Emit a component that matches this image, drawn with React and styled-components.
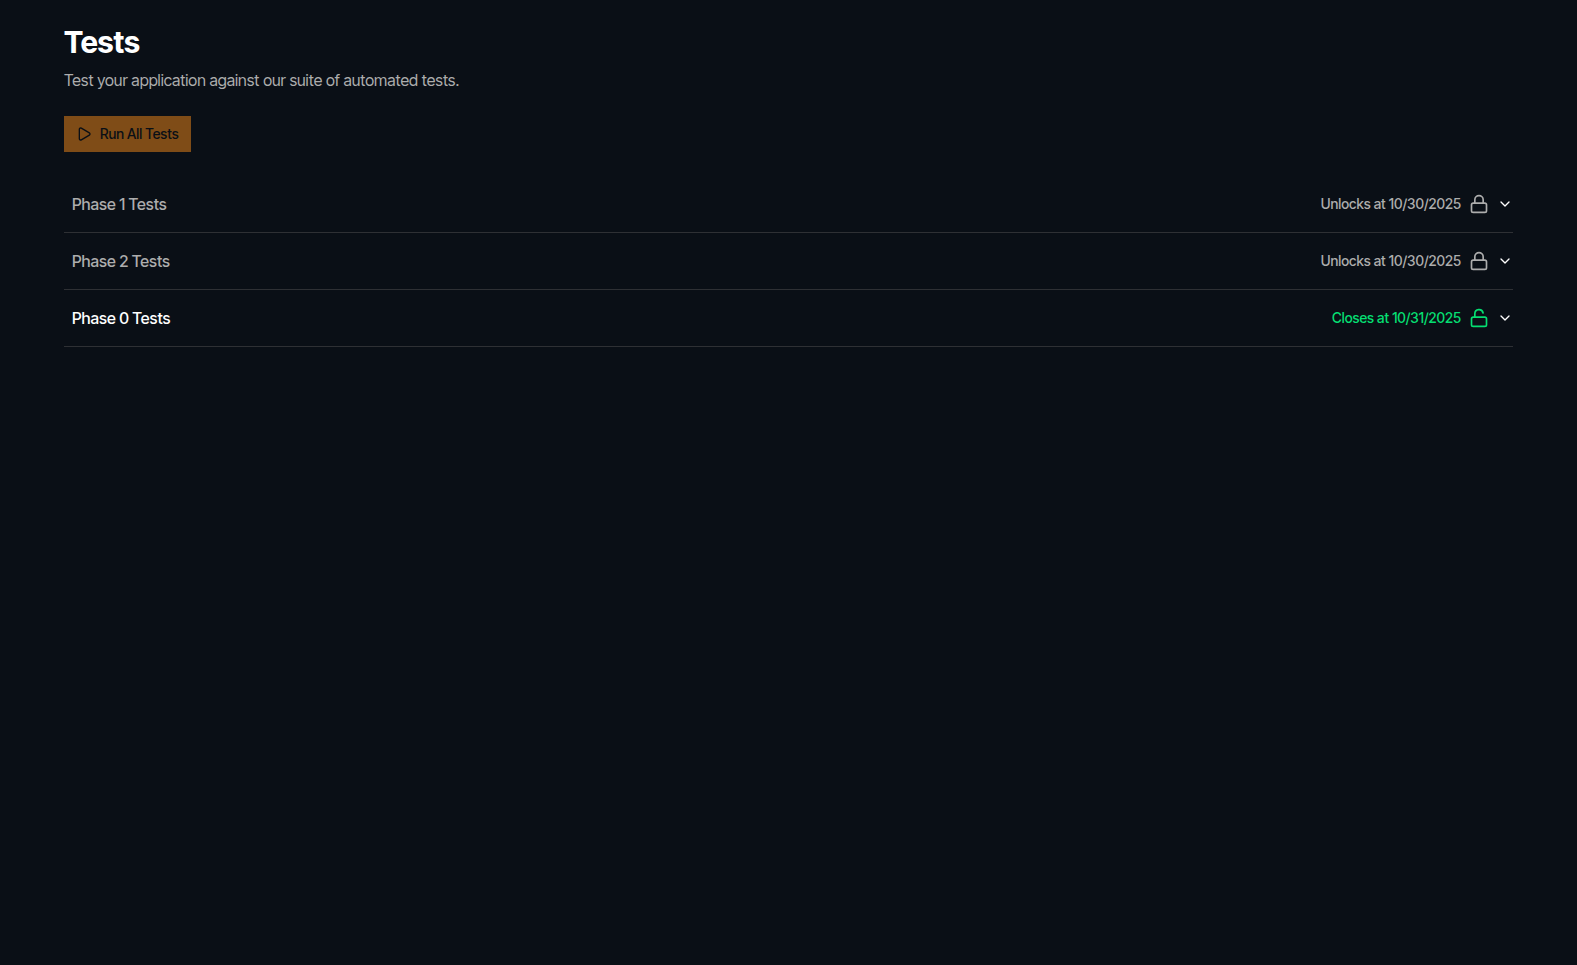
import React from 'react';
import styled, { createGlobalStyle } from 'styled-components';
import * as Accordion from '@radix-ui/react-accordion';
import { ChevronDown, Lock, LockOpen, Play } from 'lucide-react';

const GlobalStyle = createGlobalStyle`
  *, *::before, *::after {
    box-sizing: border-box;
  }

  body {
    margin: 0;
    background-color: #0a0f16;
    color: #ffffff;
    font-family: 'Inter Tight', 'Inter Display', Inter, 'Liberation Sans', sans-serif;
    font-size: 16px;
    line-height: 24px;
    font-variation-settings: 'opsz' 32;
  }
`;

const Page = styled.main`
  padding: 24px 64px;
`;

const Title = styled.h1`
  margin: 0;
  font-size: 30px;
  line-height: 36px;
  font-weight: 700;
`;

const Subtitle = styled.p`
  margin: 8px 0 24px;
  color: #adadad;
`;

const RunButton = styled.button`
  display: inline-flex;
  align-items: center;
  gap: 8px;
  height: 36px;
  padding: 0 12px;
  border: none;
  background-color: #7f4c17;
  color: #0a0f16;
  font-family: inherit;
  font-size: 14px;
  line-height: 20px;
  font-weight: 500;
  font-variation-settings: inherit;
`;

const TestList = styled(Accordion.Root)`
  margin-top: 24px;
`;

const TestItem = styled(Accordion.Item)`
  border-bottom: 1px solid #2e3034;
`;

const TestHeader = styled(Accordion.Header)`
  margin: 0;
  font-size: 16px;
  font-weight: 500;
`;

const TestTrigger = styled(Accordion.Trigger)`
  display: flex;
  align-items: center;
  width: 100%;
  padding: 16px 0 16px 8px;
  border: none;
  background: none;
  color: inherit;
  font: inherit;
  font-variation-settings: inherit;
  text-align: left;
  cursor: pointer;

  &[data-state='open'] > svg {
    transform: rotate(180deg);
  }
`;

const TestName = styled.span`
  flex: 1;
  color: ${({ $open }) => ($open ? '#ffffff' : '#adadad')};
`;

const Status = styled.span`
  display: flex;
  align-items: center;
  gap: 8px;
  margin-right: 8px;
  font-size: 14px;
  color: ${({ $open }) => ($open ? '#05df72' : '#adadad')};
`;

const TestBody = styled(Accordion.Content)`
  padding: 0 8px 16px;
  color: #adadad;
`;

const phases = [
  { id: 1, status: 'Unlocks at 10/30/2025', open: false },
  { id: 2, status: 'Unlocks at 10/30/2025', open: false },
  { id: 0, status: 'Closes at 10/31/2025', open: true },
];

function Phase({ id, status, open }) {
  const Icon = open ? LockOpen : Lock;

  return (
    <TestItem value={`phase-${id}`}>
      <TestHeader>
        <TestTrigger>
          <TestName $open={open}>Phase {id} Tests</TestName>
          <Status $open={open}>
            {status}
            <Icon size={20} />
          </Status>
          <ChevronDown size={16} />
        </TestTrigger>
      </TestHeader>
      <TestBody />
    </TestItem>
  );
}

function App() {
  return (
    <>
      <GlobalStyle />
      <Page>
        <Title>Tests</Title>
        <Subtitle>
          Test your application against our suite of automated tests.
        </Subtitle>
        <RunButton type="button" disabled>
          <Play size={16} />
          Run All Tests
        </RunButton>
        <TestList type="multiple">
          {phases.map((phase) => (
            <Phase key={phase.id} {...phase} />
          ))}
        </TestList>
      </Page>
    </>
  );
}

export default App;
